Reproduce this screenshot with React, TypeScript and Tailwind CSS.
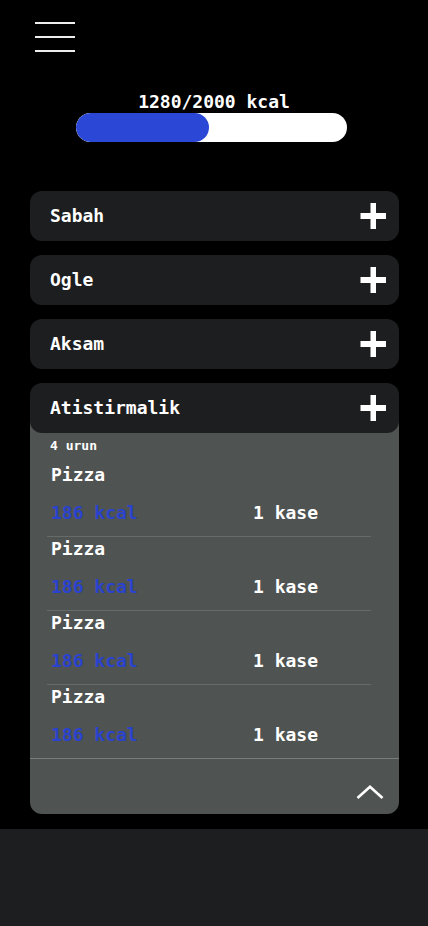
import React from 'react';

type Food = { name: string; kcal: number; amount: string };

const meals = ['Sabah', 'Ogle', 'Aksam'];

const snacks: Food[] = [
  { name: 'Pizza', kcal: 186, amount: '1 kase' },
  { name: 'Pizza', kcal: 186, amount: '1 kase' },
  { name: 'Pizza', kcal: 186, amount: '1 kase' },
  { name: 'Pizza', kcal: 186, amount: '1 kase' },
];

function PlusIcon() {
  return (
    <svg width="26" height="26" viewBox="0 0 26 26" className="shrink-0">
      <rect x="0.5" y="10" width="25.5" height="6" fill="#fff" />
      <rect x="10.5" y="0" width="5.5" height="26" fill="#fff" />
    </svg>
  );
}

function MealHeader({ title }: { title: string }) {
  return (
    <div className="relative flex h-[50px] items-center justify-between rounded-[12px] bg-[#1d1e20] pl-5 pr-[13px]">
      <span className="text-[18px] leading-[24px] font-bold text-white">{title}</span>
      <PlusIcon />
    </div>
  );
}

export default function App() {
  const eaten = 1280;
  const goal = 2000;

  return (
    <div
      className="flex min-h-[926px] w-full flex-col bg-black text-white"
      style={{ fontFamily: '"DejaVu Sans Mono", "Liberation Mono", monospace' }}
    >
      <div className="flex-1 pb-[15px]">
        {/* menu */}
        <div className="flex flex-col gap-[12px] pl-[35px] pt-[22px]">
          <div className="h-[2px] w-[40px] bg-[#eeeeee]" />
          <div className="h-[2px] w-[40px] bg-[#eeeeee]" />
          <div className="h-[2px] w-[40px] bg-[#eeeeee]" />
        </div>

        {/* calories */}
        <div className="mt-[39px] flex flex-col items-center">
          <div className="text-[18px] leading-[22px] font-bold">
            {eaten}/{goal} kcal
          </div>
          <div className="mr-[5px] h-[29px] w-[271px] overflow-hidden rounded-full bg-white">
            <div className="h-full w-[133px] rounded-full bg-[#2a47d6]" />
          </div>
        </div>

        {/* meals */}
        <div className="ml-[30px] mt-[49px] flex w-[369px] flex-col gap-[14px]">
          {meals.map((m) => (
            <MealHeader key={m} title={m} />
          ))}

          <div>
            <MealHeader title="Atistirmalik" />
            <div className="-mt-[13px] rounded-b-[12px] bg-[#4f5351] pt-[18px]">
              <div className="pl-5 text-[13px] leading-[16px] font-bold">{snacks.length} urun</div>
              <div className="mx-[17px] mt-[9px] w-[324px]">
                {snacks.map((f, i) => (
                  <div
                    key={i}
                    className={
                      i < snacks.length - 1
                        ? 'border-b border-[#666a68] pb-[11px] pl-1'
                        : 'pb-[11px] pl-1'
                    }
                  >
                    <div className="text-[18px] leading-[24px] font-bold">{f.name}</div>
                    <div className="mt-[14px] flex text-[18px] leading-[24px] font-bold">
                      <span className="w-[202px] text-[#2a43cf]">{f.kcal} kcal</span>
                      <span>{f.amount}</span>
                    </div>
                  </div>
                ))}
              </div>
              <div className="flex justify-end border-t border-[#7a7d7b] pb-[15px] pr-[15px] pt-[26px]">
                <svg width="28" height="14" viewBox="0 0 28 14" fill="none">
                  <path d="M1.5 13 L14 1.8 L26.5 13" stroke="#fff" strokeWidth="2.6" />
                </svg>
              </div>
            </div>
          </div>
        </div>
      </div>

      <div className="h-[98px] w-full bg-[#1d1e20]" />
    </div>
  );
}
